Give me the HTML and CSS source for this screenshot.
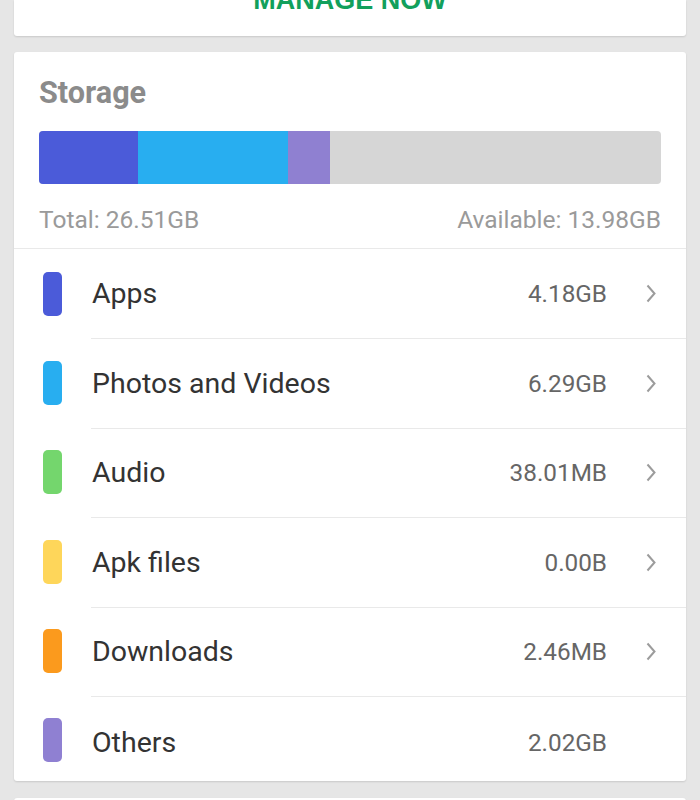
FILE: index.html
```html
<!DOCTYPE html>
<html>
<head>
<meta charset="utf-8">
<link rel="stylesheet" href="styles.css">
</head>
<body>
<div class="card card-top">
  <div class="manage">MANAGE NOW</div>
</div>
<div class="card storage">
  <div class="header">
    <div class="title">Storage</div>
    <div class="bar">
      <div class="seg seg-apps" style="width:99px"></div>
      <div class="seg seg-photos" style="width:150px"></div>
      <div class="seg seg-others" style="width:42px"></div>
    </div>
    <div class="totals">
      <span>Total: 26.51GB</span>
      <span>Available: 13.98GB</span>
    </div>
  </div>
  <div class="row first">
    <div class="swatch c-apps"></div>
    <div class="row-body">
      <span class="label">Apps</span>
      <span class="value">4.18GB</span>
      <svg class="chev" viewBox="0 0 10 19"><polyline points="1.5,1.5 8.5,9.5 1.5,17.5"/></svg>
    </div>
  </div>
  <div class="row">
    <div class="swatch c-photos"></div>
    <div class="row-body">
      <span class="label">Photos and Videos</span>
      <span class="value">6.29GB</span>
      <svg class="chev" viewBox="0 0 10 19"><polyline points="1.5,1.5 8.5,9.5 1.5,17.5"/></svg>
    </div>
  </div>
  <div class="row">
    <div class="swatch c-audio"></div>
    <div class="row-body">
      <span class="label">Audio</span>
      <span class="value">38.01MB</span>
      <svg class="chev" viewBox="0 0 10 19"><polyline points="1.5,1.5 8.5,9.5 1.5,17.5"/></svg>
    </div>
  </div>
  <div class="row">
    <div class="swatch c-apk"></div>
    <div class="row-body">
      <span class="label">Apk files</span>
      <span class="value">0.00B</span>
      <svg class="chev" viewBox="0 0 10 19"><polyline points="1.5,1.5 8.5,9.5 1.5,17.5"/></svg>
    </div>
  </div>
  <div class="row">
    <div class="swatch c-downloads"></div>
    <div class="row-body">
      <span class="label">Downloads</span>
      <span class="value">2.46MB</span>
      <svg class="chev" viewBox="0 0 10 19"><polyline points="1.5,1.5 8.5,9.5 1.5,17.5"/></svg>
    </div>
  </div>
  <div class="row last">
    <div class="swatch c-others"></div>
    <div class="row-body">
      <span class="label">Others</span>
      <span class="value">2.02GB</span>
      <svg class="chev hidden" viewBox="0 0 10 19"><polyline points="1.5,1.5 8.5,9.5 1.5,17.5"/></svg>
    </div>
  </div>
</div>
<div class="card next"></div>
</body>
</html>
```
FILE: styles.css
```css
html, body {
  margin: 0;
  padding: 0;
}
body {
  background: #e6e6e6;
  padding: 0 14px;
  font-family: Roboto, "Noto Sans", sans-serif;
  overflow: hidden;
  height: 800px;
}
.card {
  background: #ffffff;
  border-radius: 3px;
  box-shadow: 0 1px 2px rgba(0, 0, 0, 0.13);
}
.card-top {
  height: 36px;
  overflow: hidden;
  border-radius: 0 0 3px 3px;
  text-align: center;
}
.manage {
  font-family: "Liberation Sans", Arial, sans-serif;
  font-weight: bold;
  font-size: 27px;
  line-height: 1;
  color: #12a05c;
  margin-top: -13px;
}
.storage {
  margin-top: 16px;
}
.header {
  padding: 26px 25px 16px;
  border-bottom: 1px solid #e9e9e9;
}
.title {
  font-size: 30.6px;
  line-height: 1;
  font-weight: bold;
  color: #8b8b8b;
}
.bar {
  margin-top: 22px;
  height: 53px;
  border-radius: 4px;
  background: #d6d6d6;
  display: flex;
  overflow: hidden;
}
.seg {
  height: 100%;
}
.seg-apps { background: #4b5bd9; }
.seg-photos { background: #28aef0; }
.seg-others { background: #8f80d1; }
.totals {
  margin-top: 24px;
  display: flex;
  justify-content: space-between;
  font-size: 24.5px;
  line-height: 1;
  color: #9a9a9a;
}
.row {
  display: flex;
  align-items: center;
  height: 89.5px;
}
.row.first {
  height: 89px;
}
.row.last {
  height: 85px;
}
.swatch {
  flex: none;
  width: 19px;
  height: 44px;
  border-radius: 5px;
  margin-left: 29px;
}
.row.last .swatch {
  margin-top: 3px;
}
.c-apps { background: #4b5bd9; }
.c-photos { background: #28aef0; }
.c-audio { background: #74d66d; }
.c-apk { background: #fed65a; }
.c-downloads { background: #fb9a1d; }
.c-others { background: #8f80d2; }
.row-body {
  flex: 1;
  align-self: stretch;
  box-sizing: border-box;
  margin-left: 29px;
  padding-left: 1px;
  border-top: 1px solid #e9e9e9;
  display: flex;
  align-items: center;
}
.row.first .row-body {
  border-top: none;
}
.row.last .row-body {
  padding-top: 6px;
}
.label {
  font-size: 28.5px;
  color: #333333;
}
.value {
  margin-left: auto;
  font-size: 24.3px;
  color: #666666;
}
.chev {
  flex: none;
  width: 10px;
  height: 19px;
  margin-left: 39px;
  margin-right: 30px;
  fill: none;
  stroke: #9c9c9c;
  stroke-width: 2;
}
.chev.hidden {
  visibility: hidden;
}
.next {
  margin-top: 17px;
  height: 40px;
}
```
